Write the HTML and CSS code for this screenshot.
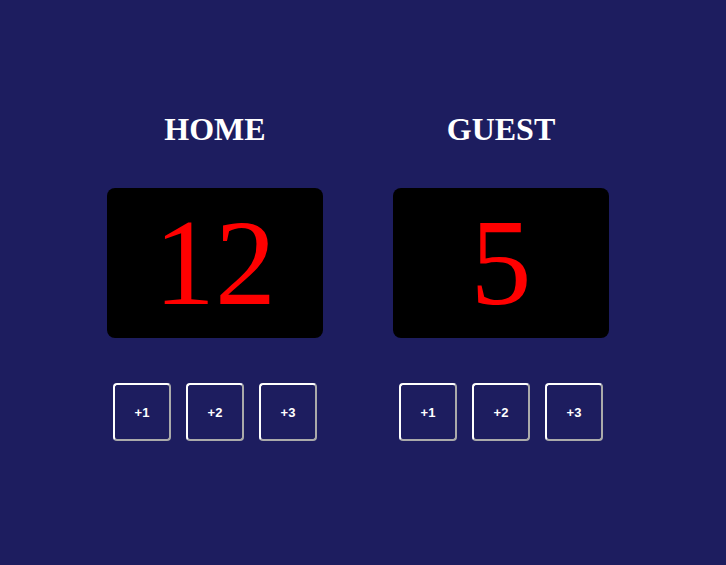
FILE: index.html
```html
<!DOCTYPE html>
<html>
<head>
<meta charset="utf-8">
<link rel="stylesheet" href="styles.css">
</head>
<body>
<main class="board">
  <section class="team">
    <h1 class="title">HOME</h1>
    <div class="score">12</div>
    <div class="buttons">
      <button class="btn">+1</button>
      <button class="btn">+2</button>
      <button class="btn">+3</button>
    </div>
  </section>
  <section class="team">
    <h1 class="title">GUEST</h1>
    <div class="score">5</div>
    <div class="buttons">
      <button class="btn">+1</button>
      <button class="btn">+2</button>
      <button class="btn">+3</button>
    </div>
  </section>
</main>
</body>
</html>
```

FILE: styles.css
```css
html, body {
  margin: 0;
  padding: 0;
  background: #1d1d5f;
  height: 100%;
}
.board {
  display: flex;
  gap: 70px;
  padding: 113px 0 0 107px;
}
.team {
  width: 216px;
  display: flex;
  flex-direction: column;
  align-items: center;
}
.title {
  margin: 0;
  font-family: "Liberation Serif", serif;
  font-size: 32px;
  line-height: 32px;
  font-weight: bold;
  color: #fff;
}
.score {
  margin-top: 43px;
  width: 100%;
  height: 150px;
  background: #000;
  border-radius: 8px;
  display: flex;
  align-items: center;
  justify-content: center;
  font-family: "Liberation Serif", serif;
  font-size: 122px;
  line-height: 1;
  color: #ff0000;
}
.buttons {
  margin-top: 45px;
  display: flex;
  gap: 15px;
}
.btn {
  width: 58px;
  height: 58px;
  box-sizing: border-box;
  background: transparent;
  border: 2px solid;
  border-color: #fff #aaa #aaa #fff;
  border-radius: 4px;
  color: #fff;
  font-family: "Liberation Sans", Arial, sans-serif;
  font-size: 13px;
  font-weight: bold;
  padding: 0;
}
```
